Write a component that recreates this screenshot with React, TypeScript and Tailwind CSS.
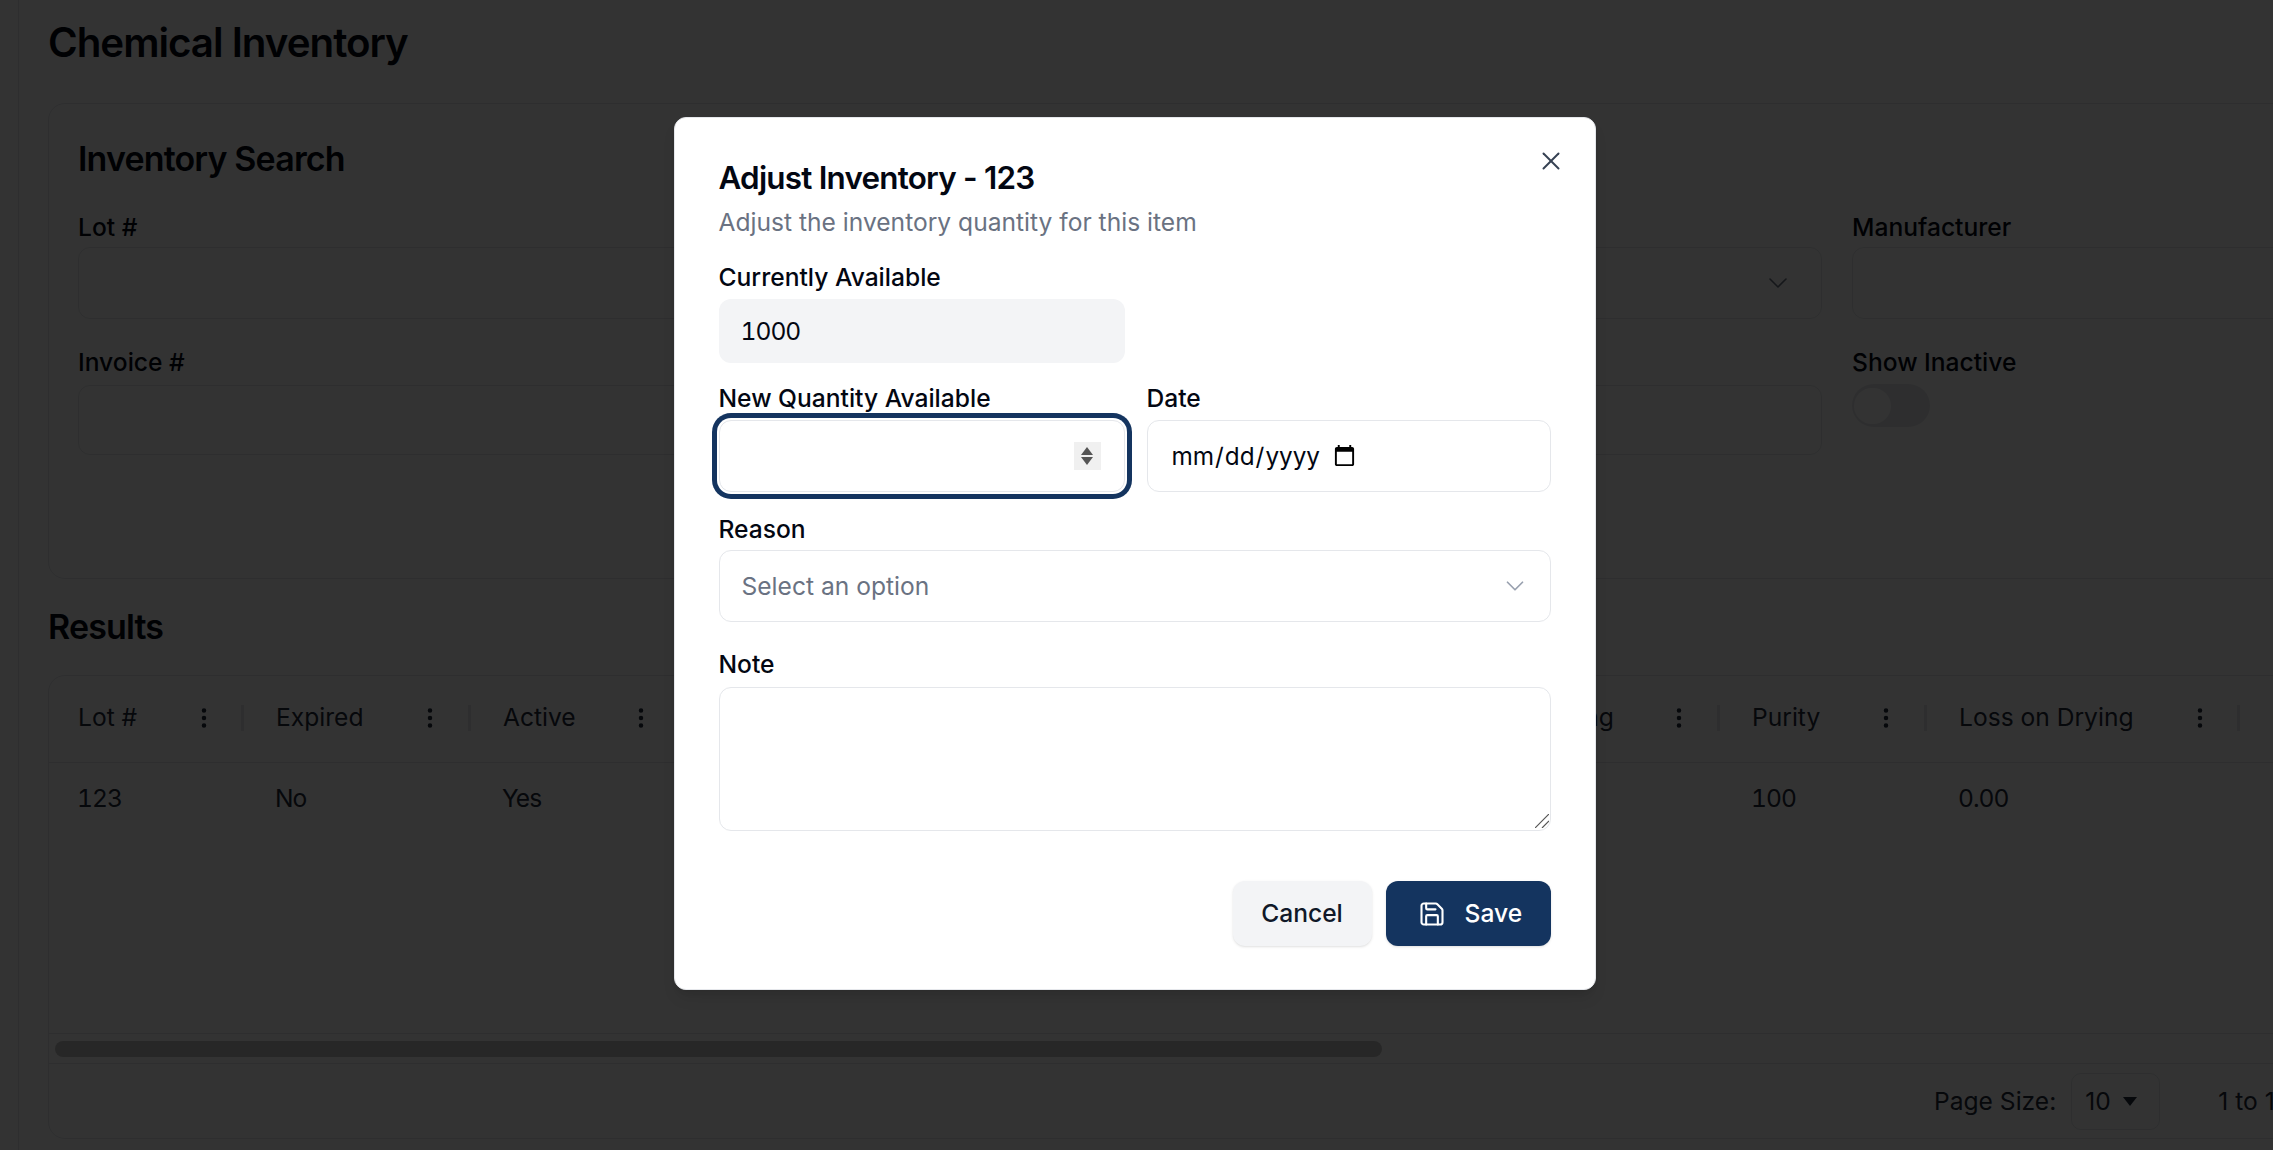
import { ChevronDown, EllipsisVertical, Save, X } from "lucide-react";

function HeaderCell({ label, width, gap = "gap-[25px]" }: { label?: string; width: string; gap?: string }) {
  return (
    <div className={`flex h-full shrink-0 items-center pl-[29px] pr-[3px] ${width} ${gap}`}>
      <span className="flex-1 whitespace-nowrap">{label}</span>
      <EllipsisVertical size={26} strokeWidth={2.2} className="shrink-0" />
      <div className="h-[26px] w-[3px] shrink-0 bg-gray-200" />
    </div>
  );
}

function BodyCell({ value, width }: { value?: string; width: string }) {
  return <div className={`shrink-0 pl-[28px] tabular-nums tracking-[-1px] ${width}`}>{value}</div>;
}

function SearchField({ label, lower, children }: { label: string; lower?: boolean; children?: React.ReactNode }) {
  return (
    <div>
      <div className="h-[28px] text-[24.6px] font-medium leading-[28px]">{label}</div>
      <div className={`relative rounded-[12px] border border-gray-200 ${lower ? "mt-[9px] h-[70px]" : "mt-[6px] h-[72px]"}`}>{children}</div>
    </div>
  );
}

function InventoryPage() {
  return (
    <div className="flex h-[1150px] w-[2273px] overflow-hidden bg-white font-[Inter,sans-serif] text-gray-950">
      <div className="w-[19px] shrink-0 border-r border-gray-200" />
      <div className="shrink-0 pl-[29px]">
        <h1 className="mt-[22px] h-[42px] text-[40.3px] font-semibold leading-[42px] tracking-tight">Chemical Inventory</h1>

        <section className="mt-[39px] h-[476px] w-[2680px] rounded-[17px] border border-gray-200 px-[29px]">
          <h2 className="mt-[35px] h-[40px] text-[34px] font-semibold leading-[40px] tracking-tight">Inventory Search</h2>
          <div className="mt-[34px] grid grid-cols-[856px_858px_830px] gap-x-[30px] gap-y-[29px]">
            <SearchField label="Lot #" />
            <SearchField label="Type">
              <ChevronDown size={32} strokeWidth={1.2} className="absolute right-[27px] top-[19px] text-gray-500" />
            </SearchField>
            <SearchField label="Manufacturer" />
            <SearchField label="Invoice #" lower />
            <SearchField label="Vendor" lower />
            <div>
              <div className="h-[28px] text-[24.6px] font-medium leading-[28px]">Show Inactive</div>
              <div className="mt-[8px] flex h-[43px] w-[78px] items-center rounded-full bg-gray-200 pl-[2px]">
                <div className="h-[36px] w-[37px] rounded-full bg-white" />
              </div>
            </div>
          </div>
        </section>

        <h2 className="mt-[28px] h-[40px] text-[34px] font-semibold leading-[40px] tracking-tight">Results</h2>

        <section className="mt-[28px] flex h-[464px] w-[2680px] flex-col rounded-[17px] border border-gray-200 text-[24.6px]">
          <div className="flex h-[87px] shrink-0 items-center border-b border-gray-200 pb-[3px] text-gray-800">
            <HeaderCell label="Lot #" width="w-[198px]" gap="gap-[24px]" />
            <HeaderCell label="Expired" width="w-[227px]" gap="gap-[25px]" />
            <HeaderCell label="Active" width="w-[211px]" gap="gap-[25px]" />
            <div className="w-[815px] shrink-0" />
            <HeaderCell label="Testing" width="w-[223px]" gap="gap-[25px]" />
            <HeaderCell label="Purity" width="w-[207px]" gap="gap-[25px]" />
            <HeaderCell label="Loss on Drying" width="w-[313px]" gap="gap-[24px]" />
            <HeaderCell label="Quantity" width="w-[200px]" />
          </div>
          <div className="flex h-[270px] shrink-0 pt-[21px] leading-[29px] text-gray-800">
            <BodyCell value="123" width="w-[198px]" />
            <BodyCell value="No" width="w-[227px]" />
            <BodyCell value="Yes" width="w-[1249px]" />
            <BodyCell value="100" width="w-[207px]" />
            <BodyCell value="0.00" width="w-[313px]" />
            <BodyCell value="1000" width="w-[200px]" />
          </div>
          <div className="flex h-[31px] shrink-0 items-center border-y border-gray-200 pl-[6px]">
            <div className="h-[16px] w-[1327px] rounded-full bg-[#c3c3c3]" />
          </div>
          <div className="flex flex-1 items-center pl-[1885px] text-gray-800">
            <span className="whitespace-nowrap">Page Size:</span>
            <div className="ml-[15px] flex h-[57px] w-[89px] shrink-0 items-center rounded-[10px] border border-gray-200 pl-[13px]">
              10
              <span className="ml-[12px] h-0 w-0 border-x-[7px] border-t-[9px] border-x-transparent border-t-gray-800" />
            </div>
            <span className="ml-[58px] whitespace-nowrap">1 to 1 of 1</span>
          </div>
        </section>
      </div>
    </div>
  );
}

function ModalLabel({ children }: { children: React.ReactNode }) {
  return <label className="block h-[29px] text-[24.6px] font-medium leading-[29px] text-gray-950">{children}</label>;
}

function AdjustDialog() {
  return (
    <div className="absolute inset-0 flex items-start justify-center bg-black/80 pr-[4px] pt-[117px] font-[Inter,sans-serif]">
      <div className="relative h-[873px] w-[922px] rounded-[12px] border border-gray-200 bg-white px-[44px] pt-[40px] shadow-lg">
        <button className="absolute right-[29px] top-[28px] text-gray-700">
          <X size={30} strokeWidth={1.6} />
        </button>

        <h3 className="h-[40px] text-[31.4px] font-semibold leading-[40px] tracking-tight text-gray-950">Adjust Inventory - 123</h3>
        <p className="mt-[10px] h-[29px] text-[24.6px] leading-[29px] text-gray-500">Adjust the inventory quantity for this item</p>

        <div className="mt-[26px] grid grid-cols-[406px_1fr] gap-x-[22px]">
          <div>
            <ModalLabel>Currently Available</ModalLabel>
            <input
              readOnly
              value="1000"
              className="mt-[7px] h-[64px] w-full rounded-[12px] bg-gray-100 px-[22px] text-[24.6px] tabular-nums tracking-[-1px] text-gray-950 outline-none"
            />
          </div>
          <div />
          <div className="mt-[21px]">
            <ModalLabel>New Quantity Available</ModalLabel>
            <div className="relative mt-[7px]">
              <input
                type="text"
                className="h-[72px] w-full rounded-[12px] border border-gray-200 bg-white px-[21px] text-[24.6px] outline-none ring-[5px] ring-[#14345f] ring-offset-2"
              />
              <div className="absolute right-[24px] top-[22px] flex h-[28px] w-[27px] flex-col items-center justify-center gap-[2px] bg-[#f0f0f0]">
                <span className="h-0 w-0 border-x-[6px] border-b-[8px] border-x-transparent border-b-[#555]" />
                <span className="h-0 w-0 border-x-[6px] border-t-[8px] border-x-transparent border-t-[#555]" />
              </div>
            </div>
          </div>
          <div className="mt-[21px]">
            <ModalLabel>Date</ModalLabel>
            <div className="mt-[7px] flex h-[72px] items-center rounded-[12px] border border-gray-200 bg-white pl-[23px]">
              <input
                type="date"
                className="w-[188px] bg-transparent text-[24.3px] text-gray-950 outline-none"
              />
            </div>
          </div>
        </div>

        <div className="mt-[23px]">
          <ModalLabel>Reason</ModalLabel>
          <button className="mt-[6px] flex h-[72px] w-full items-center justify-between rounded-[12px] border border-gray-200 bg-white pl-[22px] pr-[20px] text-[24.6px] text-gray-500">
            Select an option
            <ChevronDown size={30} strokeWidth={1.4} className="text-gray-400" />
          </button>
        </div>

        <div className="mt-[28px]">
          <ModalLabel>Note</ModalLabel>
          <div className="relative mt-[8px] h-[144px]">
            <textarea className="block h-full w-full resize-none rounded-[12px] border border-gray-200 bg-white px-[21px] py-[12px] text-[24.6px] outline-none" />
            <svg viewBox="0 0 14 14" className="absolute bottom-[3px] right-[2px] h-[14px] w-[14px]" fill="none" stroke="#555" strokeWidth="1.2">
              <path d="M14 0 0 14M14 7l-7 7" />
            </svg>
          </div>
        </div>

        <div className="mt-[50px] flex justify-end gap-[14px]">
          <button className="h-[65px] w-[139px] rounded-[12px] bg-gray-100 text-[24.6px] font-medium text-gray-900 shadow-sm">Cancel</button>
          <button className="flex h-[65px] w-[165px] items-center gap-[19px] rounded-[12px] bg-[#14345f] pl-[32px] text-[24.6px] font-medium text-white shadow-sm">
            <Save size={28} strokeWidth={1.8} />
            Save
          </button>
        </div>
      </div>
    </div>
  );
}

export default function App() {
  return (
    <div className="relative h-[1150px] w-[2273px] overflow-hidden">
      <InventoryPage />
      <AdjustDialog />
    </div>
  );
}
